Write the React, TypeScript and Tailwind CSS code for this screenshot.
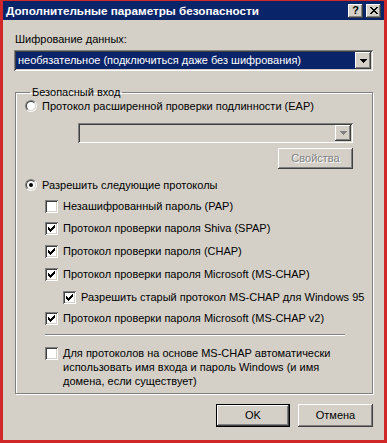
import type { ReactNode } from "react";

const font = "font-['Liberation_Sans',Arial,sans-serif]";
const raised =
  "shadow-[inset_-1px_-1px_#404040,inset_1px_1px_#ffffff,inset_-2px_-2px_#808080,inset_2px_2px_#d4d0c8]";
const sunken =
  "shadow-[inset_1px_1px_#808080,inset_-1px_-1px_#ffffff,inset_2px_2px_#404040,inset_-2px_-2px_#d4d0c8]";

function Arrow({ disabled }: { disabled?: boolean }) {
  return (
    <svg width="7" height="4" viewBox="0 0 7 4" shapeRendering="crispEdges">
      <path d="M0 0h7v1H0zM1 1h5v1H1zM2 2h3v1H2zM3 3h1v1H3z" fill={disabled ? "#808080" : "#000"} />
    </svg>
  );
}

function DropButton({ disabled }: { disabled?: boolean }) {
  return (
    <div className={`w-[16px] h-full bg-[#d4d0c8] flex items-center justify-center ${raised}`}>
      <Arrow disabled={disabled} />
    </div>
  );
}

function Checkbox({ checked }: { checked?: boolean }) {
  return (
    <div className={`w-[13px] h-[13px] shrink-0 bg-white ${sunken} flex items-center justify-center`}>
      {checked && (
        <svg width="7" height="7" viewBox="0 0 7 7" shapeRendering="crispEdges">
          <path d="M0 2h1v3H0zM1 3h1v3H1zM2 4h1v3H2zM3 3h1v3H3zM4 2h1v3H4zM5 1h1v3H5zM6 0h1v3H6z" fill="#000" />
        </svg>
      )}
    </div>
  );
}

function Radio({ checked }: { checked?: boolean }) {
  return (
    <div className="w-[12px] h-[12px] shrink-0 rounded-full border border-t-[#808080] border-l-[#808080] border-b-white border-r-white">
      <div className="w-full h-full rounded-full bg-white border border-t-[#404040] border-l-[#404040] border-b-[#d4d0c8] border-r-[#d4d0c8] flex items-center justify-center">
        {checked && <div className="w-[4px] h-[4px] rounded-full bg-black" />}
      </div>
    </div>
  );
}

function CheckRow({ checked, children, className = "" }: { checked?: boolean; children: ReactNode; className?: string }) {
  return (
    <div className={`flex items-center gap-[5px] h-[14px] whitespace-nowrap ${className}`}>
      <Checkbox checked={checked} />
      <span>{children}</span>
    </div>
  );
}

export default function App() {
  return (
    <div className={`w-[387px] h-[443px] border-[3px] border-t-[1px] border-[#d02828] bg-[#d4d0c8] text-[11px] leading-[13px] text-black ${font} flex flex-col`}>
      {/* title bar */}
      <div className="h-[19px] bg-[#0a246a] flex items-center justify-between pl-[3px] pr-[3px]">
        <span className="text-white font-bold text-[11.7px]">Дополнительные параметры безопасности</span>
        <div className="flex gap-[3px]">
          <div className={`w-[15px] h-[14px] bg-[#d4d0c8] ${raised} flex items-center justify-center text-[11px] font-bold leading-none`}>?</div>
          <div className={`w-[15px] h-[14px] bg-[#d4d0c8] ${raised} flex items-center justify-center`}>
            <svg width="8" height="7" viewBox="0 0 8 7" shapeRendering="crispEdges">
              <path d="M0 0h2v1H0zM6 0h2v1H6zM1 1h2v1H1zM5 1h2v1H5zM2 2h4v1H2zM3 3h2v1H3zM2 4h4v1H2zM1 5h2v1H1zM5 5h2v1H5zM0 6h2v1H0zM6 6h2v1H6z" fill="#000" />
            </svg>
          </div>
        </div>
      </div>

      <div className="flex-1 px-[11px] pt-[13px]">
        <div className="pl-[1px] h-[13px]">Шифрование данных:</div>
        <div className={`mt-[4px] h-[21px] bg-white ${sunken} p-[2px] flex`}>
          <div className="flex-1 bg-[#0a246a] text-white flex items-center pl-[2px]">
            необязательное (подключиться даже без шифрования)
          </div>
          <DropButton />
        </div>

        {/* group box */}
        <fieldset className="mt-[15px] ml-[1px] border border-[#808080] shadow-[1px_1px_#ffffff,inset_1px_1px_#ffffff] pl-[9px] pr-[4px] pb-[5px]">
          <legend className="ml-[5px] px-[2px] h-[13px]">Безопасный вход</legend>
          <div className="flex items-center gap-[5px] h-[14px]">
            <Radio />
            <span>Протокол расширенной проверки подлинности (EAP)</span>
          </div>
          <div className={`ml-[53px] mr-[15px] mt-[10px] h-[20px] bg-[#d4d0c8] ${sunken} p-[2px] flex justify-end`}>
            <DropButton disabled />
          </div>
          <div className="flex justify-end mt-[5px] mr-[15px]">
            <div className={`w-[75px] h-[21px] ${raised} flex items-center justify-center text-[#808080] [text-shadow:1px_1px_#ffffff]`}>
              Свойства
            </div>
          </div>
          <div className="flex items-center gap-[5px] h-[14px] mt-[9px]">
            <Radio checked />
            <span>Разрешить следующие протоколы</span>
          </div>
          <div className="pl-[20px]">
            <CheckRow className="mt-[7px]">Незашифрованный пароль (PAP)</CheckRow>
            <CheckRow checked className="mt-[8px]">Протокол проверки пароля Shiva (SPAP)</CheckRow>
            <CheckRow checked className="mt-[9px]">Протокол проверки пароля (CHAP)</CheckRow>
            <CheckRow checked className="mt-[9px]">Протокол проверки пароля Microsoft (MS-CHAP)</CheckRow>
            <CheckRow checked className="mt-[9px] ml-[18px]">Разрешить старый протокол MS-CHAP для Windows 95</CheckRow>
            <CheckRow checked className="mt-[7px]">Протокол проверки пароля Microsoft (MS-CHAP v2)</CheckRow>
            <div className="mt-[9px] mr-[23px] h-[2px] border-t border-t-[#808080] border-b border-b-white" />
            <div className="mt-[10px] flex gap-[5px] items-start">
              <div className="mt-[1px]">
                <Checkbox />
              </div>
              <span className="leading-[14px] whitespace-nowrap">
                Для протоколов на основе MS-CHAP автоматически
                <br />
                использовать имя входа и пароль Windows (и имя
                <br />
                домена, если существует)
              </span>
            </div>
          </div>
        </fieldset>

        <div className="flex justify-end gap-[8px] mt-[10px]">
          <div className="w-[74px] h-[23px] border border-black">
            <div className={`w-full h-full ${raised} flex items-center justify-center`}>OK</div>
          </div>
          <div className={`w-[75px] h-[23px] ${raised} flex items-center justify-center`}>Отмена</div>
        </div>
      </div>
    </div>
  );
}
